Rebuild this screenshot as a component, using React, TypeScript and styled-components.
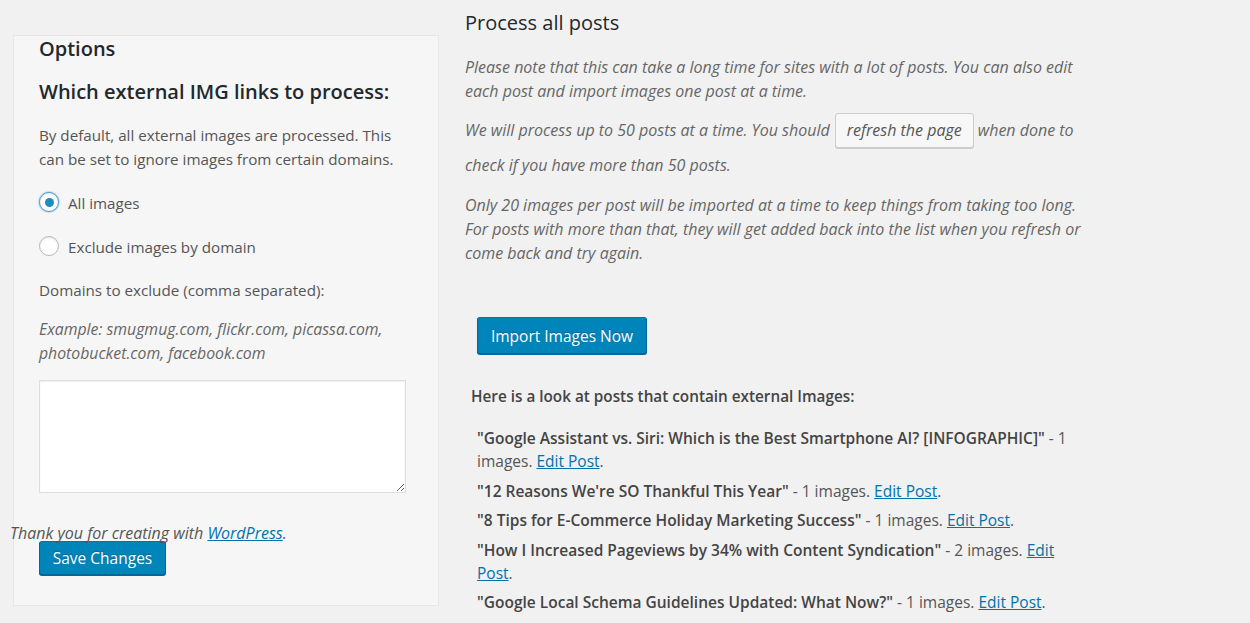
import React from "react";
import styled, { createGlobalStyle } from "styled-components";

const Global = createGlobalStyle`
  html, body { margin: 0; padding: 0; background: #f1f1f1; }
  body {
    font-family: "Open Sans", "Noto Sans", "Liberation Sans", sans-serif;
    color: #444;
    font-size: 15px;
  }
  * { box-sizing: border-box; }
`;

const Page = styled.div`
  position: relative;
  display: flex;
  align-items: flex-start;
  width: 1250px;
  min-height: 623px;
  overflow: hidden;
`;

const Panel = styled.form`
  margin: 35px 0 0 13px;
  width: 426px;
  flex: none;
  background: #f6f6f6;
  border: 1px solid #e6e6e6;
  padding: 0 33px 30px 25px;
`;

const PanelTitle = styled.h2`
  margin: 0;
  font-size: 20px;
  line-height: 26px;
  font-weight: 600;
  color: #23282d;
`;

const SectionTitle = styled.h3`
  margin: 17px 0 0;
  font-size: 20px;
  line-height: 26px;
  font-weight: 600;
  color: #23282d;
`;

const Text = styled.p<{ $mt: number }>`
  margin: ${(p) => p.$mt}px 0 0;
  font-size: 15.2px;
  line-height: 24px;
  color: #555;
`;

const Hint = styled.p<{ $mt: number }>`
  margin: ${(p) => p.$mt}px 0 0;
  font-size: 15.8px;
  line-height: 24px;
  color: #666;
  font-style: italic;
`;

const RadioRow = styled.label<{ $mt: number }>`
  display: flex;
  align-items: center;
  gap: 9px;
  margin-top: ${(p) => p.$mt}px;
  height: 24px;
  font-size: 15.2px;
  color: #555;
  cursor: pointer;
`;

const RadioCircle = styled.span<{ $checked?: boolean }>`
  width: 20px;
  height: 20px;
  flex: none;
  margin-top: -2px;
  border-radius: 50%;
  background: #fff;
  border: 1px solid ${(p) => (p.$checked ? "#5b9dd9" : "#b4b9be")};
  box-shadow: ${(p) =>
    p.$checked
      ? "0 0 2px rgba(30,140,190,.8), inset 0 1px 2px rgba(0,0,0,.07)"
      : "inset 0 1px 2px rgba(0,0,0,.1)"};
  display: flex;
  align-items: center;
  justify-content: center;
  &::after {
    content: "";
    display: ${(p) => (p.$checked ? "block" : "none")};
    width: 9px;
    height: 9px;
    border-radius: 50%;
    background: #1e8cbe;
  }
`;

const Area = styled.textarea`
  display: block;
  margin-top: 15px;
  width: 367px;
  height: 113px;
  background: #fff;
  border: 1px solid #ddd;
  box-shadow: inset 0 1px 2px rgba(0, 0, 0, 0.07);
  font: inherit;
`;

const PrimaryButton = styled.button<{ $w: number; $h: number; $mt: number; $ml?: number }>`
  display: block;
  margin: ${(p) => p.$mt}px 0 0 ${(p) => p.$ml || 0}px;
  width: ${(p) => p.$w}px;
  height: ${(p) => p.$h}px;
  padding: 0;
  background: #0085ba;
  border: 1px solid #0073aa;
  border-color: #0073aa #006799 #006799;
  border-radius: 3px;
  box-shadow: 0 1px 0 #006799;
  color: #fff;
  font-family: inherit;
  font-size: 15.5px;
  text-shadow: 0 -1px 1px #006799;
  cursor: pointer;
`;

const Main = styled.div`
  margin-left: 26px;
  width: 620px;
  flex: none;
`;

const MainTitle = styled.h2`
  margin: 10px 0 0;
  font-size: 20px;
  line-height: 26px;
  font-weight: 400;
  color: #23282d;
`;

const Desc = styled.p<{ $mt: number; $lh?: number }>`
  margin: ${(p) => p.$mt}px 0 0;
  font-size: 16px;
  line-height: ${(p) => p.$lh || 24}px;
  color: #666;
  font-style: italic;
`;

const SecondaryButton = styled.button`
  display: inline-block;
  vertical-align: middle;
  margin: -3px 4px 0 5px;
  width: 139px;
  height: 35px;
  padding: 0;
  background: #f7f7f7;
  border: 1px solid #ccc;
  border-radius: 3px;
  box-shadow: 0 1px 0 #ccc;
  color: #555;
  font-family: inherit;
  font-style: italic;
  font-size: 16px;
  cursor: pointer;
`;

const ListIntro = styled.p`
  margin: 30px 0 0 6px;
  font-size: 15.3px;
  line-height: 24px;
  font-weight: 600;
  color: #444;
`;

const PostList = styled.ul`
  list-style: none;
  margin: 19px 0 0 12px;
  padding: 0;
`;

const PostItem = styled.li`
  font-size: 15.5px;
  line-height: 23px;
  margin-bottom: 6.5px;
  color: #555;
`;

const PostTitle = styled.span`
  font-weight: 600;
  color: #444;
`;

const Link = styled.a`
  color: #0073aa;
  text-decoration: underline;
`;

const Footer = styled.div`
  position: absolute;
  left: 10px;
  top: 521px;
  font-size: 16px;
  line-height: 24px;
  font-style: italic;
  color: #555;
`;

const posts: { title: string; count: number }[] = [
  { title: "Google Assistant vs. Siri: Which is the Best Smartphone AI? [INFOGRAPHIC]", count: 1 },
  { title: "12 Reasons We're SO Thankful This Year", count: 1 },
  { title: "8 Tips for E-Commerce Holiday Marketing Success", count: 1 },
  { title: "How I Increased Pageviews by 34% with Content Syndication", count: 2 },
  { title: "Google Local Schema Guidelines Updated: What Now?", count: 1 },
];

export default function App() {
  return (
    <Page>
      <Global />
      <Panel onSubmit={(e) => e.preventDefault()}>
        <PanelTitle>Options</PanelTitle>
        <SectionTitle>Which external IMG links to process:</SectionTitle>
        <Text $mt={18}>
          By default, all external images are processed. This can be set to ignore images from certain domains.
        </Text>
        <RadioRow $mt={20}>
          <RadioCircle $checked />
          All images
        </RadioRow>
        <RadioRow $mt={20}>
          <RadioCircle />
          Exclude images by domain
        </RadioRow>
        <Text $mt={19}>Domains to exclude (comma separated):</Text>
        <Hint $mt={15}>Example: smugmug.com, flickr.com, picassa.com, photobucket.com, facebook.com</Hint>
        <Area />
        <PrimaryButton $w={127} $h={34} $mt={48}>
          Save Changes
        </PrimaryButton>
      </Panel>
      <Main>
        <MainTitle>Process all posts</MainTitle>
        <Desc $mt={19}>
          Please note that this can take a long time for sites with a lot of posts. You can also edit each post and
          import images one post at a time.
        </Desc>
        <Desc $mt={10} $lh={35}>
          We will process up to 50 posts at a time. You should
          <SecondaryButton type="button">refresh the page</SecondaryButton>
          when done to check if you have more than 50 posts.
        </Desc>
        <Desc $mt={10}>
          Only 20 images per post will be imported at a time to keep things from taking too long. For posts with more
          than that, they will get added back into the list when you refresh or come back and try again.
        </Desc>
        <PrimaryButton $w={170} $h={37} $mt={52} $ml={12}>
          Import Images Now
        </PrimaryButton>
        <ListIntro>Here is a look at posts that contain external Images:</ListIntro>
        <PostList>
          {posts.map((p) => (
            <PostItem key={p.title}>
              <PostTitle>"{p.title}"</PostTitle> - {p.count} images. <Link href="#">Edit Post</Link>.
            </PostItem>
          ))}
        </PostList>
      </Main>
      <Footer>
        Thank you for creating with <Link href="#">WordPress</Link>.
      </Footer>
    </Page>
  );
}
